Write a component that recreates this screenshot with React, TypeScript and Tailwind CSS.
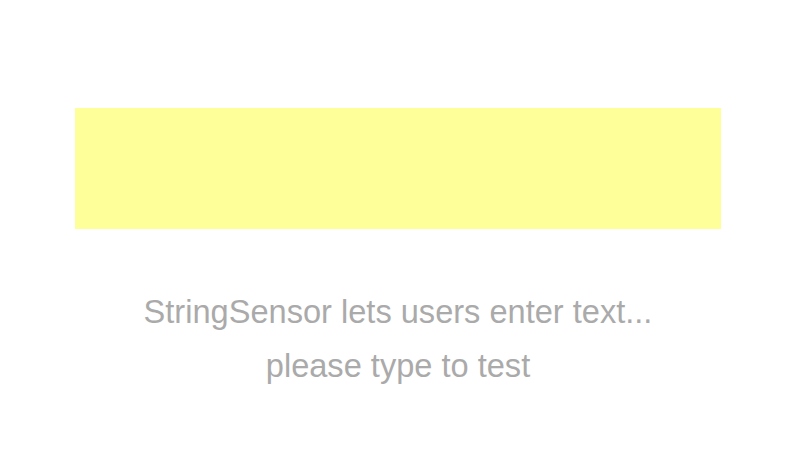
import React from 'react';

export default function App() {
  return (
    <div className="w-[792px] h-[465px] bg-white overflow-hidden font-['Liberation_Sans',Arial,sans-serif]">
      <div className="ml-[75px] w-[646px] pt-[108px]">
        <div className="h-[121px] bg-[#ffff99]" />
        <div className="mt-[56px] text-center text-[32.6px] leading-[54px] text-[#aaaaaa]">
          <p>StringSensor lets users enter text...</p>
          <p>please type to test</p>
        </div>
      </div>
    </div>
  );
}
